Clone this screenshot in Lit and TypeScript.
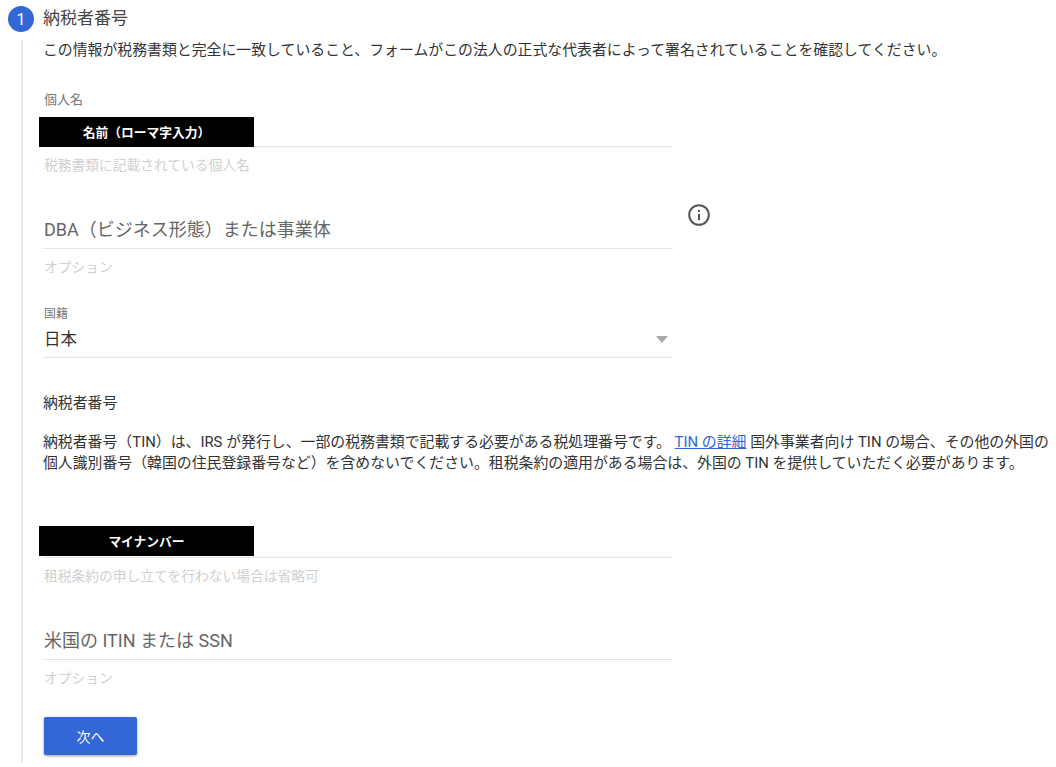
import { LitElement, html, css } from "lit";
import { customElement } from "lit/decorators.js";

@customElement("app-root")
export class AppRoot extends LitElement {
  static styles = css`
    :host {
      display: block;
      width: 1056px;
      height: 767px;
      overflow: hidden;
      background: #fff;
      font-family: Roboto, "Noto Sans CJK JP", sans-serif;
      color: #333;
    }
    .header {
      display: flex;
      align-items: center;
      gap: 9px;
      padding: 6px 0 0 8px;
      height: 26px;
    }
    .step {
      width: 26px;
      height: 26px;
      border-radius: 50%;
      background: #3367d6;
      color: #fff;
      font-size: 16px;
      display: flex;
      align-items: center;
      justify-content: center;
    }
    .title {
      font-size: 17px;
      line-height: 24px;
      color: #444;
      margin-top: -2px;
    }
    .body {
      margin: 8px 0 0 21px;
      border-left: 2px solid #e6e6e6;
      padding-left: 20px;
      height: 722px;
      box-sizing: border-box;
    }
    .desc {
      font-size: 14.88px;
      line-height: 20px;
      color: #333;
      margin: 0;
      white-space: nowrap;
    }
    .field {
      width: 630px;
      position: relative;
    }
    .label {
      font-size: 13px;
      line-height: 18px;
      color: #777;
      margin-top: 31px;
      padding-left: 1px;
    }
    .small {
      font-size: 12px;
      line-height: 16px;
      color: #777;
      padding-left: 1px;
    }
    .input {
      border-bottom: 1px solid #e4e4e4;
      box-sizing: border-box;
      font-size: 18px;
      line-height: 28px;
      color: #666;
      height: 33px;
      padding-left: 1px;
    }
    .helper {
      font-size: 13.75px;
      line-height: 18px;
      color: #d0d0d0;
      margin-top: 9px;
      padding-left: 1px;
    }
    .redact {
      position: absolute;
      left: -4px;
      top: -1px;
      width: 215px;
      height: 30px;
      background: #000;
      color: #fff;
      font-size: 12.75px;
      line-height: 32px;
      font-weight: 700;
      text-align: center;
    }
    .name-input {
      height: 29px;
      margin-top: 9px;
      position: relative;
    }
    .my-input {
      height: 31px;
      position: relative;
    }
    .f-dba {
      margin-top: 42px;
    }
    .f-nat {
      margin-top: 30px;
    }
    .select {
      border-bottom: 1px solid #e4e4e4;
      height: 36px;
      box-sizing: border-box;
      display: flex;
      align-items: center;
      justify-content: space-between;
      font-size: 16.5px;
      color: #333;
      padding: 0 5px 3px 1px;
    }
    .arrow {
      width: 0;
      height: 0;
      border-left: 6.5px solid transparent;
      border-right: 6.5px solid transparent;
      border-top: 7px solid #aaa;
      margin-top: 3px;
    }
    .info {
      position: absolute;
      right: -38px;
      top: -13px;
      width: 24px;
      height: 24px;
      display: block;
    }
    .section {
      font-size: 14.88px;
      line-height: 20px;
      color: #333;
      margin: 35px 0 0;
    }
    .para {
      font-size: 14.88px;
      line-height: 21px;
      color: #333;
      margin: 19px 0 0;
      white-space: nowrap;
    }
    .para a {
      color: #3367d6;
      text-decoration: underline;
    }
    .f-my {
      margin-top: 53px;
    }
    .f-itin {
      margin-top: 42px;
    }
    .button {
      margin: 30px 0 0 1px;
      width: 93px;
      height: 38px;
      background: #3367d6;
      border-radius: 2px;
      border: none;
      color: #fff;
      font: inherit;
      font-size: 14px;
      box-shadow: 0 1px 3px rgba(0, 0, 0, 0.4);
      display: block;
      padding: 0;
    }
  `;

  render() {
    return html`
      <div class="header">
        <div class="step">1</div>
        <div class="title">納税者番号</div>
      </div>
      <div class="body">
        <p class="desc">この情報が税務書類と完全に一致していること、フォームがこの法人の正式な代表者によって署名されていることを確認してください。</p>

        <div class="field">
          <div class="label">個人名</div>
          <div class="input name-input"><div class="redact">名前（ローマ字入力）</div></div>
          <div class="helper">税務書類に記載されている個人名</div>
        </div>

        <div class="field f-dba">
          <div class="input">DBA（ビジネス形態）または事業体</div>
          <svg class="info" viewBox="0 0 24 24" aria-hidden="true">
            <circle cx="12" cy="12" r="9.8" fill="none" stroke="#555" stroke-width="2" />
            <rect x="11" y="10.8" width="2" height="6.4" fill="#555" />
            <rect x="11" y="6.9" width="2" height="2.1" fill="#555" />
          </svg>
          <div class="helper">オプション</div>
        </div>

        <div class="field f-nat">
          <div class="small">国籍</div>
          <div class="select"><span>日本</span><span class="arrow"></span></div>
        </div>

        <div class="section">納税者番号</div>
        <p class="para">納税者番号（TIN）は、IRS が発行し、一部の税務書類で記載する必要がある税処理番号です。 <a href="#">TIN の詳細</a> 国外事業者向け TIN の場合、その他の外国の<br />個人識別番号（韓国の住民登録番号など）を含めないでください。租税条約の適用がある場合は、外国の TIN を提供していただく必要があります。</p>

        <div class="field f-my">
          <div class="input my-input"><div class="redact">マイナンバー</div></div>
          <div class="helper">租税条約の申し立てを行わない場合は省略可</div>
        </div>

        <div class="field f-itin">
          <div class="input">米国の ITIN または SSN</div>
          <div class="helper">オプション</div>
        </div>

        <button class="button">次へ</button>
      </div>
    `;
  }
}
